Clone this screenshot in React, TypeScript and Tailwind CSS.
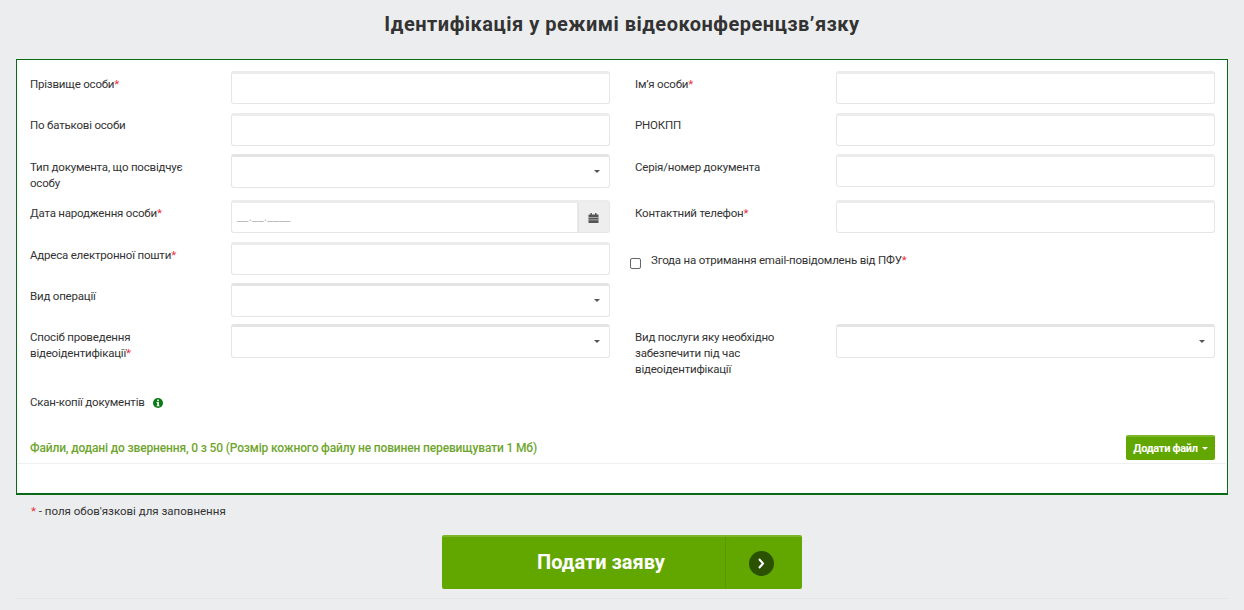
const fontStack = "font-['Roboto','Noto_Sans',sans-serif]";

function Req() {
  return <span className="text-[#e8303a]">*</span>;
}

function Label({ children, className = "pt-[5px]" }: { children: React.ReactNode; className?: string }) {
  return (
    <div className={`w-[201px] shrink-0 pr-[30px] text-[11.5px] leading-4 tracking-[-0.2px] text-[#333] ${className}`}>
      {children}
    </div>
  );
}

function Caret() {
  return <span className="absolute right-[9px] top-[13px] h-0 w-0 border-x-[3px] border-t-[3px] border-x-transparent border-t-[#555]" />;
}

function TextBox() {
  return (
    <div className="h-[33px] w-[379px] rounded-[3px] border border-[#e6e6e6] border-t-[3px] border-t-[#ececec] bg-white" />
  );
}

function SelectBox() {
  return (
    <div className="relative h-[34px] w-[379px] rounded-[3px] border border-[#e6e6e6] border-t-[3px] border-t-[#e4e4e4] bg-white">
      <Caret />
    </div>
  );
}

function DateBox() {
  return (
    <div className="flex h-[33px] w-[379px] overflow-hidden rounded-[3px] border border-[#e6e6e6] border-t-[3px] border-t-[#ececec] bg-white">
      <div className="flex-1 pl-[5px] pt-[8px] text-[12.5px] leading-3 tracking-[0.2px] text-[#bbb]">__.__.____</div>
      <div className="flex w-[32px] items-center justify-center border-l-2 border-[#e6e6e6] bg-[#eeeeee] pr-[2px]">
        <svg width="11" height="10" viewBox="0 0 10 10" fill="#555">
          <rect x="0" y="1.5" width="10" height="8.5" rx="0.5" />
          <rect x="2" y="0" width="1.4" height="2.5" />
          <rect x="6.6" y="0" width="1.4" height="2.5" />
          <rect x="0" y="4" width="10" height="0.6" fill="#ddd" />
          <rect x="0" y="6.6" width="10" height="0.6" fill="#ddd" />
        </svg>
      </div>
    </div>
  );
}

function Cell({ label, field, labelClass }: { label: React.ReactNode; field?: React.ReactNode; labelClass?: string }) {
  return (
    <div className="flex w-[580px]">
      <Label className={labelClass}>{label}</Label>
      {field}
    </div>
  );
}

export default function App() {
  return (
    <div className={`h-[610px] w-[1244px] overflow-hidden bg-[#ecedef] ${fontStack}`}>
      <h1 className="pt-[11px] text-center text-[20px] font-bold leading-[27px] tracking-[0.5px] text-[#333]">
        Ідентифікація у режимі відеоконференцзв’язку
      </h1>

      <div className="mx-4 mt-[21px] h-[436px] border border-b-2 border-[#0b6a16] bg-white pl-[13px] pr-3 pt-[11px]">
        <div className="flex h-[42px] justify-between">
          <Cell label={<>Прізвище особи<Req /></>} field={<TextBox />} />
          <Cell label={<>Ім’я особи<Req /></>} field={<TextBox />} />
        </div>
        <div className="flex h-[41px] justify-between">
          <Cell labelClass="pt-[4px]" label="По батькові особи" field={<TextBox />} />
          <Cell labelClass="pt-[4px]" label="РНОКПП" field={<TextBox />} />
        </div>
        <div className="flex h-[46px] justify-between">
          <Cell label="Тип документа, що посвідчує особу" field={<SelectBox />} />
          <Cell label="Серія/номер документа" field={<TextBox />} />
        </div>
        <div className="flex h-[42px] justify-between">
          <Cell label={<>Дата народження особи<Req /></>} field={<DateBox />} />
          <Cell label={<>Контактний телефон<Req /></>} field={<TextBox />} />
        </div>
        <div className="flex h-[41px] justify-between">
          <Cell label={<>Адреса електронної пошти<Req /></>} field={<TextBox />} />
          <div className="flex w-[580px] items-start">
            <div className="-ml-[5px] mt-[16px] h-[11px] w-[11px] rounded-[2px] border border-[#666] bg-white" />
            <div className="ml-[10px] pt-[10px] text-[11.5px] leading-4 tracking-[-0.2px] text-[#333]">
              Згода на отримання email-повідомлень від ПФУ<Req />
            </div>
          </div>
        </div>
        <div className="flex h-[41px] justify-between">
          <Cell label="Вид операції" field={<SelectBox />} />
          <div className="w-[580px]" />
        </div>
        <div className="flex h-[70px] justify-between">
          <Cell label={<>Спосіб проведення відеоідентифікації<Req /></>} field={<SelectBox />} />
          <Cell label="Вид послуги яку необхідно забезпечити під час відеоідентифікації" field={<SelectBox />} />
        </div>

        <div className="flex items-center text-[11.5px] leading-4 tracking-[-0.2px] text-[#333]">
          Скан-копії документів
          <svg className="ml-2 mt-[1px]" width="10" height="10" viewBox="0 0 10 10">
            <circle cx="5" cy="5" r="5" fill="#0b7a16" />
            <rect x="4.2" y="1.6" width="1.7" height="1.6" fill="#fff" />
            <path d="M3.5 4h2.4v3.4h.7v.9H3.5v-.9h.7V4.9h-.7z" fill="#fff" />
          </svg>
        </div>

        <div className="-ml-[13px] -mr-[11px] mt-[25px] flex h-[29px] items-start justify-between border-b border-[#f0f0f0] pl-[13px] pr-[11px]">
          <div className="pt-[5px] text-[12px] font-medium leading-4 tracking-[-0.15px] text-[#6fa52f]">
            Файли, додані до звернення, 0 з 50 (Розмір кожного файлу не повинен перевищувати 1 Мб)
          </div>
          <button className="flex h-[25px] w-[89px] items-center justify-center gap-1 rounded-[2px] border-t-2 border-[#7db62c] bg-[#62a700] text-[11px] font-bold leading-none tracking-[-0.3px] text-white">
            Додати файл
            <span className="h-0 w-0 border-x-[3px] border-t-[3px] border-x-transparent border-t-white" />
          </button>
        </div>
      </div>

      <div className="pl-[31px] pt-[8px] text-[11.5px] leading-4 text-[#333]">
        <span className="text-[#e8303a]">*</span> - поля обов'язкові для заповнення
      </div>

      <div className="mx-4 mt-[16px] h-[64px] border-b border-[#e4e5e7]">
        <button className="mx-auto flex h-[54px] w-[360px] rounded-[2px] border-t-2 border-[#7db62c] bg-[#62a700] text-white">
          <span className="flex h-full w-[283px] items-center justify-center pb-[2px] pl-[35px] text-[20px] font-bold leading-none">
            Подати заяву
          </span>
          <span className="flex h-full flex-1 items-center justify-center border-l border-[#58960a] pr-[5px]">
            <span className="flex h-[25px] w-[25px] items-center justify-center rounded-full bg-[#2b5200]">
              <svg width="9" height="11" viewBox="0 0 9 11" fill="none" stroke="#fff" strokeWidth="2">
                <path d="M2 1l4 4.5L2 10" />
              </svg>
            </span>
          </span>
        </button>
      </div>
    </div>
  );
}
